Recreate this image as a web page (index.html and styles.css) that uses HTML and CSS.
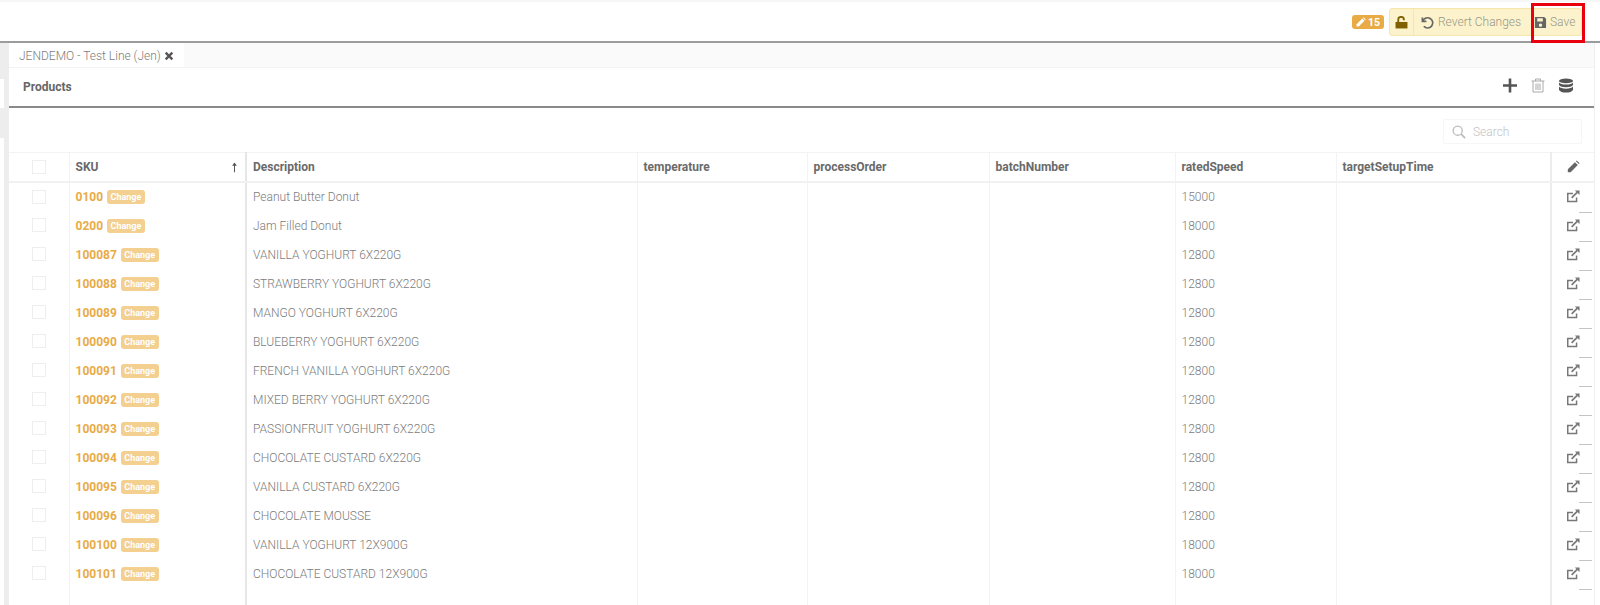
FILE: index.html
```html
<!DOCTYPE html>
<html lang="en">
<head>
<meta charset="utf-8">
<title>Products</title>
<link rel="stylesheet" href="styles.css">
</head>
<body>
<div class="app">
  <header class="topbar">
    <span class="count"><svg class="ic-count" viewBox="0 0 16 16"><path d="M1 11.500 10 2.500l3.500 3.500L4.500 15H1z" fill="currentColor"/><path d="M11.200 1.500l1-1 3.500 3.500-1 1z" fill="currentColor"/></svg>15</span>
    <div class="actions">
      <span class="act act-lock"><svg class="ic-lock" viewBox="0 0 12 12"><path d="M.5 5.500h11v6h-11z" fill="currentColor"/><path d="M3 5.500V3.400a2.600 2.600 0 0 1 5.200 0V4" fill="none" stroke="currentColor" stroke-width="1.700"/></svg></span>
      <span class="act act-revert"><svg class="ic-act" viewBox="0 0 14 14"><path d="M1.500 1.500v4.300h4.300" fill="none" stroke="#666" stroke-width="1.800"/><path d="M2 5.500A5.500 5.500 0 1 1 3 11" fill="none" stroke="#666" stroke-width="1.800"/></svg>Revert Changes</span>
      <span class="act act-save"><svg class="ic-act" viewBox="0 0 14 14"><path fill-rule="evenodd" d="M1 1h10l2 2v10H1zM3.500 2.500V6h6V2.500zM7 8a1.800 1.800 0 1 0 .01 0z" fill="#666"/></svg>Save</span>
    </div>
  </header>
  <div class="red-mark"></div>
  <div class="body">
    <aside class="rail"><span class="grip"></span></aside>
    <main class="panel">
      <div class="tabs">
        <div class="tab">JENDEMO - Test Line (Jen)<svg class="ic-x" viewBox="0 0 12 12"><path d="M2 2l8 8M10 2l-8 8" fill="none" stroke="currentColor" stroke-width="2.800"/></svg></div>
      </div>
      <div class="title-row">
        <h1 class="title">Products</h1>
        <div class="tools">
          <svg class="tool" viewBox="0 0 14 14"><path d="M7 0v14M0 7h14" fill="none" stroke="#555" stroke-width="2.600"/></svg>
          <svg class="tool" viewBox="0 0 14 14"><path d="M.5 2.500h13M4.500 2.500V.5h5v2M2 2.500v11h10v-11M5 5v6.500M7 5v6.500M9 5v6.500" fill="none" stroke="#aaa" stroke-width="1"/></svg>
          <svg class="tool" viewBox="0 0 14 14"><ellipse cx="7" cy="2.400" rx="7" ry="2.400" fill="#555"/><path d="M0 4c1 1.500 3.500 2.100 7 2.100S13 5.500 14 4v2.500C13 8 10.500 8.700 7 8.700S1 8 0 6.500zM0 8.100c1 1.500 3.500 2.100 7 2.100s6-.6 7-2.100v3.300c-1 1.700-3.500 2.600-7 2.600s-6-.9-7-2.600z" fill="#555"/></svg>
        </div>
      </div>
      <div class="search-row">
        <div class="search"><svg class="ic-search" viewBox="0 0 16 16"><circle cx="6.500" cy="6.500" r="5.200" fill="none" stroke="currentColor" stroke-width="1.500"/><path d="M10.200 10.200 15 15" stroke="currentColor" stroke-width="2"/></svg><span>Search</span></div>
      </div>
      <table class="grid">
        <colgroup><col class="c0"><col class="c1"><col class="c2"><col class="c3"><col class="c4"><col class="c5"><col class="c6"><col class="c7"><col class="c8"></colgroup>
        <thead>
          <tr>
            <th class="check"><span class="box"></span></th>
            <th class="sku-h">SKU<svg class="ic-sort" viewBox="0 0 8 12"><path d="M4 12V2" fill="none" stroke="currentColor" stroke-width="1.200"/><path d="M1.300 4.500 4 .8l2.700 3.700z" fill="currentColor"/></svg></th>
            <th class="thick">Description</th><th>temperature</th><th>processOrder</th><th>batchNumber</th><th>ratedSpeed</th><th>targetSetupTime</th>
            <th class="edit"><svg class="ic-pen" viewBox="0 0 16 16"><path d="M1 11.500 9.800 2.700l3.500 3.500L4.500 15H1z" fill="#666"/><path d="M11 1.500l1-1 3.500 3.500-1 1z" fill="#666"/></svg></th>
          </tr>
        </thead>
        <tbody>
          <tr><td class="check"><span class="box"></span></td><td class="sku"><b>0100</b><span class="chg">Change</span></td><td class="thick">Peanut Butter Donut</td><td></td><td></td><td></td><td>15000</td><td></td><td class="link"><svg class="ic-open" viewBox="0 0 14 14"><use href="#open"/></svg></td></tr>
          <tr><td class="check"><span class="box"></span></td><td class="sku"><b>0200</b><span class="chg">Change</span></td><td class="thick">Jam Filled Donut</td><td></td><td></td><td></td><td>18000</td><td></td><td class="link"><svg class="ic-open" viewBox="0 0 14 14"><use href="#open"/></svg></td></tr>
          <tr><td class="check"><span class="box"></span></td><td class="sku"><b>100087</b><span class="chg">Change</span></td><td class="thick">VANILLA YOGHURT 6X220G</td><td></td><td></td><td></td><td>12800</td><td></td><td class="link"><svg class="ic-open" viewBox="0 0 14 14"><use href="#open"/></svg></td></tr>
          <tr><td class="check"><span class="box"></span></td><td class="sku"><b>100088</b><span class="chg">Change</span></td><td class="thick">STRAWBERRY YOGHURT 6X220G</td><td></td><td></td><td></td><td>12800</td><td></td><td class="link"><svg class="ic-open" viewBox="0 0 14 14"><use href="#open"/></svg></td></tr>
          <tr><td class="check"><span class="box"></span></td><td class="sku"><b>100089</b><span class="chg">Change</span></td><td class="thick">MANGO YOGHURT 6X220G</td><td></td><td></td><td></td><td>12800</td><td></td><td class="link"><svg class="ic-open" viewBox="0 0 14 14"><use href="#open"/></svg></td></tr>
          <tr><td class="check"><span class="box"></span></td><td class="sku"><b>100090</b><span class="chg">Change</span></td><td class="thick">BLUEBERRY YOGHURT 6X220G</td><td></td><td></td><td></td><td>12800</td><td></td><td class="link"><svg class="ic-open" viewBox="0 0 14 14"><use href="#open"/></svg></td></tr>
          <tr><td class="check"><span class="box"></span></td><td class="sku"><b>100091</b><span class="chg">Change</span></td><td class="thick">FRENCH VANILLA YOGHURT 6X220G</td><td></td><td></td><td></td><td>12800</td><td></td><td class="link"><svg class="ic-open" viewBox="0 0 14 14"><use href="#open"/></svg></td></tr>
          <tr><td class="check"><span class="box"></span></td><td class="sku"><b>100092</b><span class="chg">Change</span></td><td class="thick">MIXED BERRY YOGHURT 6X220G</td><td></td><td></td><td></td><td>12800</td><td></td><td class="link"><svg class="ic-open" viewBox="0 0 14 14"><use href="#open"/></svg></td></tr>
          <tr><td class="check"><span class="box"></span></td><td class="sku"><b>100093</b><span class="chg">Change</span></td><td class="thick">PASSIONFRUIT YOGHURT 6X220G</td><td></td><td></td><td></td><td>12800</td><td></td><td class="link"><svg class="ic-open" viewBox="0 0 14 14"><use href="#open"/></svg></td></tr>
          <tr><td class="check"><span class="box"></span></td><td class="sku"><b>100094</b><span class="chg">Change</span></td><td class="thick">CHOCOLATE CUSTARD 6X220G</td><td></td><td></td><td></td><td>12800</td><td></td><td class="link"><svg class="ic-open" viewBox="0 0 14 14"><use href="#open"/></svg></td></tr>
          <tr><td class="check"><span class="box"></span></td><td class="sku"><b>100095</b><span class="chg">Change</span></td><td class="thick">VANILLA CUSTARD 6X220G</td><td></td><td></td><td></td><td>12800</td><td></td><td class="link"><svg class="ic-open" viewBox="0 0 14 14"><use href="#open"/></svg></td></tr>
          <tr><td class="check"><span class="box"></span></td><td class="sku"><b>100096</b><span class="chg">Change</span></td><td class="thick">CHOCOLATE MOUSSE</td><td></td><td></td><td></td><td>12800</td><td></td><td class="link"><svg class="ic-open" viewBox="0 0 14 14"><use href="#open"/></svg></td></tr>
          <tr><td class="check"><span class="box"></span></td><td class="sku"><b>100100</b><span class="chg">Change</span></td><td class="thick">VANILLA YOGHURT 12X900G</td><td></td><td></td><td></td><td>18000</td><td></td><td class="link"><svg class="ic-open" viewBox="0 0 14 14"><use href="#open"/></svg></td></tr>
          <tr><td class="check"><span class="box"></span></td><td class="sku"><b>100101</b><span class="chg">Change</span></td><td class="thick">CHOCOLATE CUSTARD 12X900G</td><td></td><td></td><td></td><td>18000</td><td></td><td class="link"><svg class="ic-open" viewBox="0 0 14 14"><use href="#open"/></svg></td></tr>
          <tr class="filler"><td class="check"></td><td></td><td class="thick"></td><td></td><td></td><td></td><td></td><td></td><td class="edit"></td></tr>
        </tbody>
      </table>
    </main>
  </div>
</div>
<svg class="defs" width="0" height="0"><defs><g id="open"><path d="M6.500 3.800H.8v8.700h9.500V8" fill="none" stroke="#777" stroke-width="1.600"/><path d="M5 8.500 11 2.500" stroke="#777" stroke-width="1.800"/><path d="M8.500 .5H13.500V5.500z" fill="#777"/></g></defs></svg>
</body>
</html>
```
FILE: styles.css
```css
* { box-sizing: border-box; }
html, body { margin: 0; height: 605px; overflow: hidden; background: #fff; }
body { font-family: Roboto, "Liberation Sans", sans-serif; font-size: 12px; font-weight: 300; color: #7c7c7c; }
.defs { position: absolute; }
.app { position: relative; display: flex; flex-direction: column; height: 605px; }

.topbar { height: 43px; flex: none; display: flex; align-items: center; justify-content: flex-end; padding: 4px 18px 3px 0; border-top: 2px solid #f6f6f6; border-bottom: 2px solid #9c9c9c; background: #fff; }
.count { display: flex; align-items: center; gap: 2px; height: 14px; padding: 0 4px; margin-right: 5px; border-radius: 3px; background: #e8ab45; color: #fff; font-weight: 700; font-size: 10.500px; }
.ic-count { width: 10px; height: 10px; }
.actions { display: flex; height: 28px; border: 1px solid #f5e6ac; border-radius: 3px; background: #fcf3cd; }
.act { display: flex; align-items: center; gap: 4px; color: #9a9888; font-size: 12px; white-space: nowrap; }
.act-lock { width: 24px; justify-content: center; border-right: 1px solid #f5e6ac; color: #7f5f00; }
.ic-lock { width: 13px; height: 13px; }
.ic-act { width: 13px; height: 13px; }
.act-revert { padding-left: 7px; width: 114px; }
.act-save { padding-left: 6px; width: 53px; gap: 3px; }
.red-mark { position: absolute; left: 1531px; top: 3px; width: 54px; height: 40px; border: 3px solid #e8000f; }

.body { flex: 1; min-height: 0; display: flex; }
.rail { position: relative; width: 9px; flex: none; background: linear-gradient(to right, transparent 4px, #ededed 4px), linear-gradient(to bottom, #ededed 36px, #fff 36px, #fff 65px, #ededed 65px, #ededed 95px, #fff 95px); }
.grip { position: absolute; left: 4px; top: 477px; width: 5px; height: 26px; background-image: radial-gradient(#bbb 40%, transparent 45%); background-size: 2px 2px; }

.panel { width: 1586px; flex: none; display: flex; flex-direction: column; border-right: 1px solid #efefef; }
.tabs { height: 25px; flex: none; display: flex; background: #fafafa; border-bottom: 1px solid #f3f3f3; }
.tab { width: 175px; padding: 1px 0 0 10px; display: flex; align-items: center; gap: 3px; background: #fff; font-size: 12px; white-space: nowrap; }
.ic-x { width: 10px; height: 10px; color: #555; }
.title-row { height: 40px; flex: none; display: flex; align-items: center; justify-content: space-between; padding: 0 21px 0 14px; border-bottom: 2px solid #8a8a8a; }
.title { margin: 0; font-size: 12px; font-weight: 700; color: #666; }
.tools { display: flex; gap: 14px; align-items: center; margin-top: -4px; }
.tool { width: 14px; height: 15px; }
.search-row { height: 44px; flex: none; display: flex; justify-content: flex-end; align-items: flex-start; padding: 11px 12px 0 0; }
.search { width: 139px; height: 25px; display: flex; align-items: center; gap: 7px; padding: 1px 0 0 8px; border: 1px solid #f6f6f6; border-radius: 2px; color: #c4c4c4; font-size: 12px; }
.ic-search { width: 14px; height: 14px; color: #bbb; }

.grid { flex: 1; width: 1585px; table-layout: fixed; border-collapse: collapse; }
.c0 { width: 60px; } .c1 { width: 177px; } .c2 { width: 391px; } .c3 { width: 170px; } .c4 { width: 182px; } .c5 { width: 186px; } .c6 { width: 161px; } .c7 { width: 215px; } .c8 { width: 43px; }
th, td { padding: 0 6px; text-align: left; border-left: 1px solid #f3f3f3; font-size: 12px; white-space: nowrap; }
td { padding-top: 1px; }
thead tr { height: 29px; }
th { position: relative; font-weight: 700; color: #6a6a6a; border-top: 1px solid #f3f3f3; border-bottom: 2px solid #f1f1f1; }
tbody tr { height: 29px; }
.filler { height: auto; }
th:first-child, td:first-child { border-left: 0; }
.thick { border-left: 2px solid #e6e6e6; }
.check { padding: 0; text-align: center; }
.box { display: block; width: 14px; height: 14px; margin: 0 auto 0 23px; border: 1px solid #eeeeee; }
.sku b { color: #e8ab45; font-weight: 700; }
.chg { display: inline-block; margin-left: 4px; padding: 0 3.500px; height: 14px; line-height: 14px; border-radius: 3px; background: #f3cf90; color: #fff; font-size: 9px; font-weight: 700; vertical-align: 1px; }
.ic-sort { position: absolute; right: 7px; top: 8px; width: 7px; height: 12px; color: #555; }
.edit, .link { position: relative; padding: 0; border-left: 2px solid #ececec; }
.ic-pen { display: block; width: 13px; height: 13px; margin-left: 15px; }
.ic-open { display: block; width: 13px; height: 13px; margin-left: 15px; }
.link::after { content: ""; position: absolute; left: 27px; right: 2px; bottom: -2px; height: 1px; background: #c4c4c4; }
```
